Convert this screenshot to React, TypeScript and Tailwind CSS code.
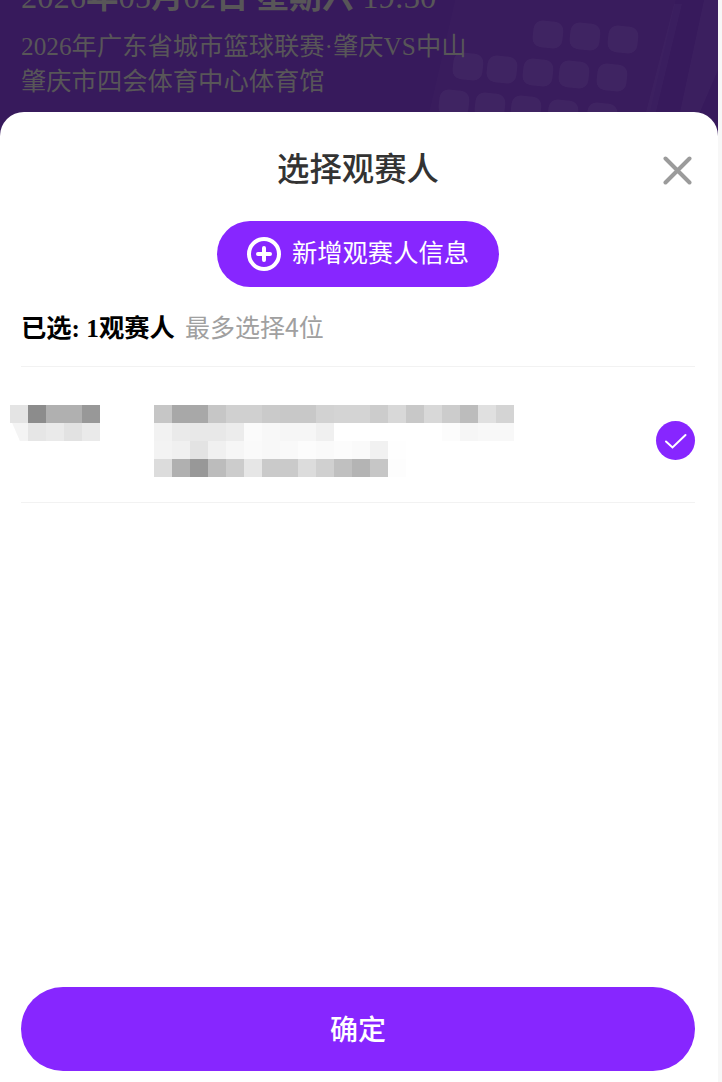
const nameCells = [
  ["#e4e4e4", "#8c8c8c", "#b0b0b0", "#b0b0b0", "#989898"],
  ["#f4f4f4", "#e6e6e6", "#eaeaea", "#e2e2e2", "#eaeaea"],
];

const addressCells = [
  ["#c6c6c6", "#a8a8a8", "#a8a8a8", "#c6c6c6", "#d0d0d0", "#d0d0d0", "#cacaca", "#c8c8c8", "#c8c8c8", "#d2d2d2", "#d4d4d4", "#d4d4d4", "#cccccc", "#d8d8d8", "#c8c8c8", "#d8d8d8", "#cccccc", "#bcbcbc", "#e0e0e0", "#d4d4d4"],
  ["#f2f2f2", "#eaeaea", "#e8e8e8", "#e8e8e8", "#ececec", "#fbfbfb", "#f8f8f8", "#f6f6f6", "#f6f6f6", "#f0f0f0", "#ffffff", "#ffffff", "#ffffff", "#ffffff", "#ffffff", "#ffffff", "#fcfcfc", "#f6f6f6", "#f8f8f8", "#f8f8f8"],
  ["#f3f3f3", "#f0f0f0", "#e3e3e3", "#f0f0f0", "#f6f6f6", "#fafafa", "#f8f8f8", "#f9f9f9", "#fcfcfc", "#fafafa", "#fcfcfc", "#fafafa", "#f1f1f1", "#fefefe"],
  ["#dcdcdc", "#b0b0b0", "#989898", "#bcbcbc", "#cccccc", "#e6e6e6", "#cacaca", "#cacaca", "#dcdcdc", "#d0d0d0", "#c0c0c0", "#b4b4b4", "#c6c6c6", "#fdfdfd"],
];

// keypad of the phone in the blurred banner image
const keys = [
  [533, 21], [570, 23], [608, 26],
  [453, 53], [487, 56], [523, 59], [559, 61], [597, 64],
  [439, 90], [475, 93], [511, 96], [548, 100], [587, 103],
];

function Mosaic({ rows }: { rows: string[][] }) {
  return (
    <div className="flex flex-col">
      {rows.map((row, i) => (
        <div key={i} className="flex h-[18px]">
          {row.map((color, j) => (
            <div
              key={j}
              className={i === 1 && j === 0 && rows.length === 2 ? "w-[18px] [clip-path:polygon(12%_0,100%_0,100%_100%,55%_100%)]" : "w-[18px]"}
              style={{ backgroundColor: color }}
            />
          ))}
        </div>
      ))}
    </div>
  );
}

export default function App() {
  return (
    <div className="flex h-[1082px] w-[722px] overflow-hidden bg-[#f7f7f7] font-['Liberation_Serif','Noto_Sans_CJK_SC',serif]">
      <div className="relative flex h-full w-[718px] flex-col bg-[#371a5c]">
        <svg className="absolute left-0 top-0" width="718" height="130" viewBox="0 0 718 130" fill="none">
          <path d="M425 130 L455 0 L676 0 L646 130 Z" fill="#fff" fillOpacity="0.012" />
          <path d="M674 4 L682 4 L656 112 L646 112 Z" fill="#fff" fillOpacity="0.02" />
          <path d="M704 0 L718 0 L718 70 L700 112 L680 112 Z" fill="#fff" fillOpacity="0.025" />
          {keys.map(([x, y], i) => (
            <rect key={i} x={x} y={y} width="30" height="27" rx="9" fill="#fff" fillOpacity="0.035" transform={`rotate(6 ${x + 15} ${y + 13})`} />
          ))}
        </svg>

        <div className="relative h-[112px] shrink-0 overflow-hidden px-[21px] text-[#585658]">
          <div className="-mt-[19px] h-[32px] whitespace-nowrap text-[32.5px] leading-[32px]">
            2026<b>年</b>05<b>月</b>02<b>日</b> <b>星期六</b> 19:30
          </div>
          <div className="mt-[16px] whitespace-nowrap text-[25.3px] leading-[35px]">2026年广东省城市篮球联赛·肇庆VS中山</div>
          <div className="whitespace-nowrap text-[25.3px] leading-[35px]">肇庆市四会体育中心体育馆</div>
        </div>

        <div className="relative flex min-h-0 flex-1 flex-col rounded-t-[24px] bg-white pl-[21px] pr-[23px]">
          <div className="flex h-[109px] shrink-0 items-start justify-center pt-[38px]">
            <h1 className="text-[32.4px] font-medium leading-[40px] text-[#333333]">选择观赛人</h1>
          </div>
          <svg className="absolute right-[26px] top-[44px]" width="29" height="29" viewBox="0 0 29 29" fill="none" stroke="#9b9b9b" strokeWidth="4" strokeLinecap="round">
            <path d="M2.5 2.5 L26.5 26.5 M26.5 2.5 L2.5 26.5" />
          </svg>

          <div className="flex justify-center">
            <button className="flex h-[66px] w-[282px] items-center justify-center gap-[11px] rounded-full bg-[#8726ff] text-[25.3px] text-white">
              <svg width="34" height="34" viewBox="0 0 34 34" fill="none" stroke="#fff">
                <circle cx="17" cy="17" r="15" strokeWidth="4" />
                <path d="M11 17 H23 M17 11 V23" strokeWidth="4" strokeLinecap="round" />
              </svg>
              <span>新增观赛人信息</span>
            </button>
          </div>

          <div className="flex h-[80px] shrink-0 items-center gap-[10px] border-b border-[#f2f2f2] pt-[5px] text-[25.3px]">
            <span className="font-bold text-black">已选: 1观赛人</span>
            <span className="mb-[4px] font-['Noto_Sans_CJK_SC',sans-serif] text-[25px] text-[#a0a0a0]">最多选择4位</span>
          </div>

          <div className="flex h-[136px] shrink-0 border-b border-[#f2f2f2]">
            <div className="-ml-[11px] w-[144px] pt-[38px]">
              <Mosaic rows={nameCells} />
            </div>
            <div className="flex-1 pt-[38px]">
              <Mosaic rows={addressCells} />
            </div>
            <div className="mt-[54px] flex size-[39px] items-center justify-center rounded-full bg-[#8726ff]">
              <svg width="24" height="24" viewBox="0 0 24 24" fill="none" stroke="#fff" strokeWidth="2" strokeLinecap="round">
                <path d="M2 12.5 L8.5 18.5 L21.5 6" />
              </svg>
            </div>
          </div>

          <div className="mt-auto pb-[11px]">
            <button className="h-[84px] w-full rounded-full bg-[#8726ff] pt-[3px] text-[28px] font-medium text-white">确定</button>
          </div>
        </div>
      </div>
    </div>
  );
}
